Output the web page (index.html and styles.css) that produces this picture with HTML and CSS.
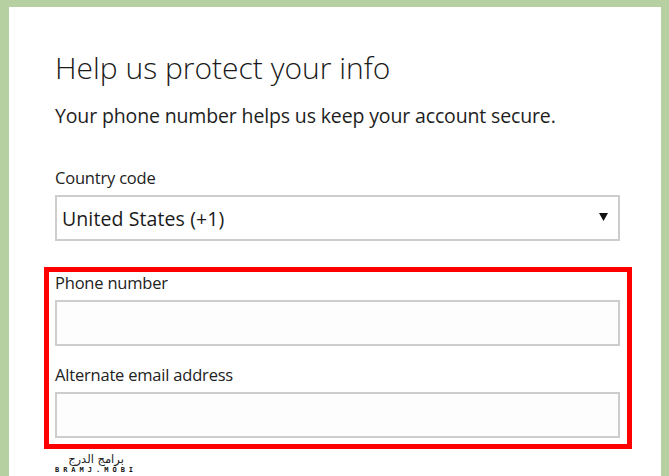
FILE: index.html
```html
<!DOCTYPE html>
<html lang="en">
<head>
<meta charset="utf-8">
<title>Help us protect your info</title>
<link rel="stylesheet" href="styles.css">
</head>
<body>
<div class="frame">
  <main class="card">
    <h1 class="title">Help us protect your info</h1>
    <p class="subtitle">Your phone number helps us keep your account secure.</p>

    <label class="label label-country">Country code</label>
    <div class="select">
      <span class="select-value">United States (+1)</span>
      <svg class="arrow" width="9" height="8" viewBox="0 0 9 8" aria-hidden="true"><polygon points="0,0 9,0 4.5,8" fill="#111"/></svg>
    </div>

    <section class="highlight">
      <label class="label">Phone number</label>
      <div class="field"></div>
      <label class="label label-alt">Alternate email address</label>
      <div class="field"></div>
    </section>

    <div class="watermark">
      <span class="wm-ar" lang="ar" dir="rtl">برامج الدرج</span>
      <span class="wm-en">BRAMJ.MOBI</span>
    </div>
  </main>
</div>
</body>
</html>
```

FILE: styles.css
```css
* { box-sizing: border-box; }

html, body {
  margin: 0;
  padding: 0;
  height: 100%;
}

body {
  background: #b7d0a2;
  font-family: "Open Sans", "Noto Sans", "DejaVu Sans", sans-serif;
  color: #1b1b1b;
  overflow: hidden;
}

.frame {
  padding: 7px 8px 0 9px;
  height: 100%;
}

.card {
  background: #ffffff;
  height: 100%;
  padding: 43px 41px 0 46px;
  display: flex;
  flex-direction: column;
  overflow: hidden;
}

.card > * {
  flex-shrink: 0;
}

.title {
  margin: 0;
  font-weight: 300;
  font-size: 30px;
  line-height: 36px;
  color: #1a1a1a;
  letter-spacing: 0;
}

.subtitle {
  margin: 18px 0 0;
  font-size: 19.5px;
  line-height: 24px;
  color: #1e1e1e;
  letter-spacing: -0.14px;
}

.label {
  display: block;
  font-size: 16.5px;
  line-height: 20px;
  color: #222;
  letter-spacing: -0.2px;
}

.label-country {
  margin-top: 40px;
}

.select {
  margin-top: 7px;
  height: 46px;
  border: 2px solid #cdcdcd;
  display: flex;
  align-items: center;
  justify-content: space-between;
  padding: 0 10px 0 5px;
}

.select-value {
  font-size: 19.5px;
  color: #1a1a1a;
  letter-spacing: 0.1px;
  margin-top: 1px;
}

.arrow {
  display: block;
  margin-top: -2px;
}

.highlight {
  margin: 26px -12px 0 -11px;
  border: 5px solid #ff0000;
  padding: 1px 7px 6px 6px;
}

.field {
  margin-top: 7px;
  height: 46px;
  border: 2px solid #cdcdcd;
  background: #fdfdfd;
}

.label-alt {
  margin-top: 19px;
}

.watermark {
  margin: 4px 0 0 -4px;
  width: 86px;
  display: flex;
  flex-direction: column;
  align-items: center;
  line-height: 1;
}

.wm-ar {
  font-family: "DejaVu Sans", sans-serif;
  font-size: 11.5px;
  line-height: 13px;
  color: #222;
  margin-left: 4px;
}

.wm-en {
  font-family: "DejaVu Sans Mono", monospace;
  font-size: 7px;
  line-height: 7px;
  font-weight: bold;
  letter-spacing: 4px;
  color: #111;
  margin-top: 1px;
  padding-left: 4px;
}
```
